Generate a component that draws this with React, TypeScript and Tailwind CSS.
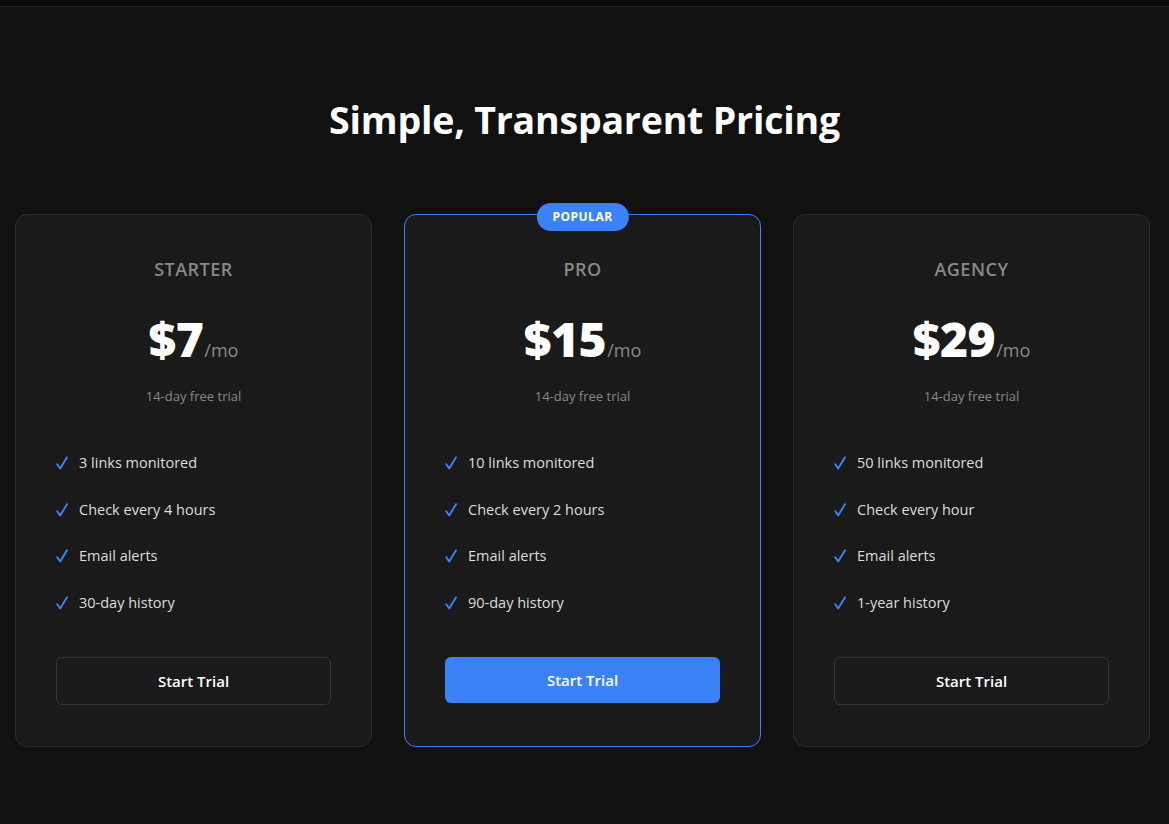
const plans = [
  {
    name: "Starter",
    price: "$7",
    features: ["3 links monitored", "Check every 4 hours", "Email alerts", "30-day history"],
    popular: false,
  },
  {
    name: "Pro",
    price: "$15",
    features: ["10 links monitored", "Check every 2 hours", "Email alerts", "90-day history"],
    popular: true,
  },
  {
    name: "Agency",
    price: "$29",
    features: ["50 links monitored", "Check every hour", "Email alerts", "1-year history"],
    popular: false,
  },
];

function Check() {
  return (
    <svg width="12" height="14" viewBox="0 0 12 14" className="mr-[11px] shrink-0">
      <path d="M1.2 8.2 L4.2 12.4 L11 1.2" fill="none" stroke="#3b82f6" strokeWidth="1.9" strokeLinecap="round" strokeLinejoin="round" />
    </svg>
  );
}

export default function App() {
  return (
    <div
      className="min-h-screen bg-[#111111] text-white"
      style={{ fontFamily: '"Open Sans", "Noto Sans", sans-serif' }}
    >
      <div className="h-[7px] bg-[#0a0a0a] border-b border-[#222]" />
      <section className="pt-[89px] pb-20">
        <h1 className="text-center text-[37.5px] leading-[48px] font-bold tracking-[-0.2px]">
          Simple, Transparent Pricing
        </h1>
        <div className="mt-[70px] ml-[15px] mr-[19px] grid grid-cols-3 gap-8">
          {plans.map((p) => (
            <div
              key={p.name}
              className={
                p.popular
                  ? "relative rounded-xl border border-[#3b82f6] bg-[#1a1a1a] px-10 pt-10 pb-[41px] flex flex-col"
                  : "relative rounded-xl border border-[#2a2a2a] bg-[#1a1a1a] px-10 pt-10 pb-[41px] flex flex-col"
              }
            >
              {p.popular && (
                <div className="absolute -top-[12px] left-1/2 -translate-x-1/2 rounded-full bg-[#3b82f6] px-4 h-[28px] flex items-center text-[12px] font-bold tracking-[0.5px]">
                  POPULAR
                </div>
              )}
              <div className="text-center text-[18px] leading-7 font-semibold uppercase tracking-[0.5px] text-[#888]">
                {p.name}
              </div>
              <div className="mt-8 flex items-end justify-center">
                <span className="text-[48px] leading-[48px] font-extrabold tracking-[-0.5px]">{p.price}</span>
                <span className="ml-[1px] text-[18px] leading-[26px] text-[#888]">/mo</span>
              </div>
              <div className="mt-[23px] text-center text-[13px] leading-5 text-[#888]">
                14-day free trial
              </div>
              <ul className="mt-[45px] flex flex-col gap-[22.6px]">
                {p.features.map((f) => (
                  <li key={f} className="flex items-center text-[14.5px] leading-6 text-[#ddd]">
                    <Check />
                    {f}
                  </li>
                ))}
              </ul>
              {p.popular ? (
                <button className="mt-[42px] mb-[2px] h-[46px] rounded-md bg-[#3b82f6] text-[15px] font-semibold text-white">
                  Start Trial
                </button>
              ) : (
                <button className="mt-[42px] h-12 rounded-md border border-[#333] bg-[#1a1a1a] text-[15px] font-semibold text-white">
                  Start Trial
                </button>
              )}
            </div>
          ))}
        </div>
      </section>
    </div>
  );
}
